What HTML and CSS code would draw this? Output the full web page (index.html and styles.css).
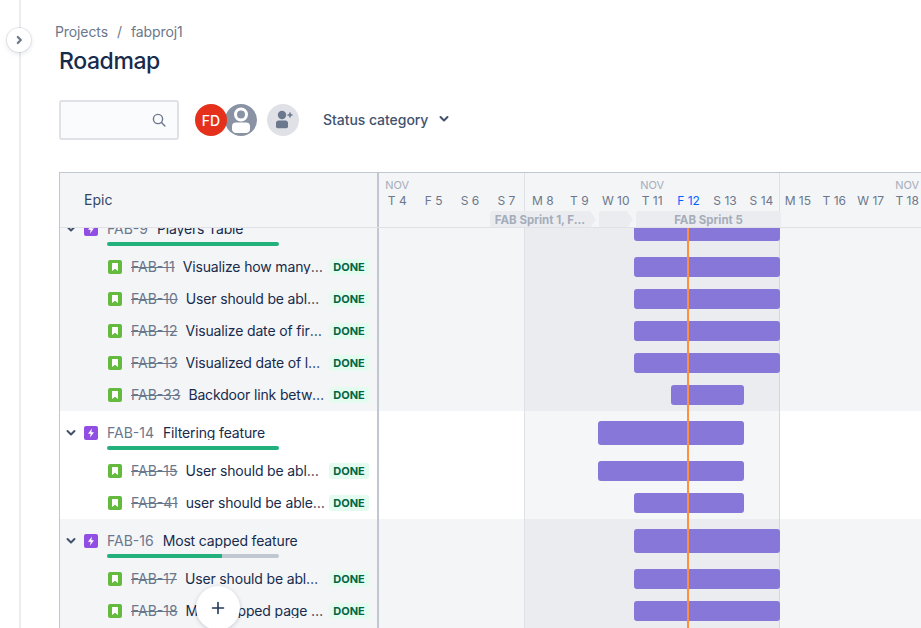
FILE: index.html
```html
<!DOCTYPE html>
<html lang="en">
<head>
    <meta name="viewport" content="width=device-width, initial-scale=1.0">
    <title>Roadmap</title>
    <link rel="stylesheet" href="styles.css">
</head>
<body>
    <div class="page">
        <div class="rail"></div>
        <button class="collapse">
            <svg width="12" height="12" viewBox="0 0 12 12"><path d="M4.800 3 7.800 6l-3 3" fill="none" stroke="#6b778c" stroke-width="2.200" stroke-linecap="round" stroke-linejoin="round"/></svg>
        </button>

        <div class="main">
            <div class="breadcrumb"><span>Projects</span><span class="sep">/</span><span>fabproj1</span></div>
            <h1>Roadmap</h1>

            <div class="toolbar">
                <div class="search">
                    <svg width="14" height="14" viewBox="0 0 14 14"><circle cx="6" cy="6" r="4.6" fill="none" stroke="#6b778c" stroke-width="1.4"/><path d="m9.500 9.500 3.400 3.400" stroke="#6b778c" stroke-width="1.4" stroke-linecap="round"/></svg>
                </div>
                <div class="avatars">
                    <div class="avatar avatar-fd">FD</div>
                    <div class="avatar avatar-user">
                        <svg width="32" height="32" viewBox="0 0 32 32"><circle cx="16" cy="10.500" r="5.500" fill="none" stroke="#fff" stroke-width="3"/><path d="M7 22c0-2.500 2-3.500 4-3.500h10c2 0 4 1 4 3.500v3c0 2.500-2 4-4 4h-10c-2 0-4-1.500-4-4z" fill="#fff"/></svg>
                    </div>
                </div>
                <div class="avatar avatar-add">
                    <svg width="20" height="20" viewBox="0 0 20 20"><circle cx="9" cy="5" r="4.200" fill="#6b778c"/><path d="M3 13c0-1.500 1-2.500 2.500-2.500h7c1.500 0 2.500 1 2.500 2.500v3.500c0 1-.8 1.700-1.700 1.700h-8.600c-.9 0-1.700-.7-1.700-1.700z" fill="#6b778c"/><path d="M17 2.500v5M14.500 5h5" stroke="#6b778c" stroke-width="1.600"/></svg>
                </div>
                <div class="filter">
                    Status category
                    <svg width="10" height="8" viewBox="0 0 10 8"><path d="m1.500 2 3.500 3.500L8.500 2" fill="none" stroke="#42526e" stroke-width="2" stroke-linecap="round" stroke-linejoin="round"/></svg>
                </div>
            </div>

            <div class="roadmap">
                <div class="head">
                    <div class="head-epic">Epic</div>
                    <div class="head-time">
                        <span class="week-line line-a"></span>
                        <span class="week-line line-b"></span>
                        <div class="days">
                            <div class="day"><small>NOV</small>T 4</div>
                            <div class="day"><small></small>F 5</div>
                            <div class="day"><small></small>S 6</div>
                            <div class="day"><small></small>S 7</div>
                            <div class="day"><small></small>M 8</div>
                            <div class="day"><small></small>T 9</div>
                            <div class="day"><small></small>W 10</div>
                            <div class="day"><small>NOV</small>T 11</div>
                            <div class="day today"><small></small>F 12</div>
                            <div class="day"><small></small>S 13</div>
                            <div class="day"><small></small>S 14</div>
                            <div class="day"><small></small>M 15</div>
                            <div class="day"><small></small>T 16</div>
                            <div class="day"><small></small>W 17</div>
                            <div class="day"><small>NOV</small>T 18</div>
                        </div>
                        <div class="sprints">
                            <div class="sprint sprint-1"><span>FAB Sprint 1, F...</span></div>
                            <div class="sprint sprint-2"></div>
                            <div class="sprint sprint-3"><span>FAB Sprint 5</span></div>
                        </div>
                    </div>
                </div>

                <div class="body">
                    <div class="week-band"></div>
                    <div class="today-line"></div>
                    <div class="rows">
                        <div class="group shaded">
                            <div class="row epic">
                                <div class="label">
                                    <svg class="caret" width="10" height="8" viewBox="0 0 10 8"><path d="m1.500 2 3.500 3.500L8.500 2" fill="none" stroke="#42526e" stroke-width="2" stroke-linecap="round" stroke-linejoin="round"/></svg>
                                    <svg class="type" width="14" height="14" viewBox="0 0 14 14"><rect width="14" height="14" rx="2" fill="#904ee2"/><path d="M8 2.500 4 7.800h2.700L6 11.500l4-5.300H7.300z" fill="#fff"/></svg>
                                    <span class="key">FAB-9</span><span class="title">Players Table</span>
                                    <div class="progress"><div class="progress-done" style="width: 100%"></div></div>
                                </div>
                                <div class="time"><div class="bar" style="margin-left: 255px; width: 146px"></div></div>
                            </div>
                            <div class="row story">
                                <div class="label">
                                    <svg class="type" width="14" height="14" viewBox="0 0 14 14"><rect width="14" height="14" rx="2" fill="#63ba3c"/><path d="M4 3.500c0-.3.200-.5.500-.5h5c.3 0 .5.200.5.500V11L7 8.800 4 11z" fill="#fff"/></svg>
                                    <span class="key">FAB-11</span><span class="title">Visualize how many players are capped</span>
                                    <span class="done">DONE</span>
                                </div>
                                <div class="time"><div class="bar" style="margin-left: 255px; width: 146px"></div></div>
                            </div>
                            <div class="row story">
                                <div class="label">
                                    <svg class="type" width="14" height="14" viewBox="0 0 14 14"><rect width="14" height="14" rx="2" fill="#63ba3c"/><path d="M4 3.500c0-.3.200-.5.500-.5h5c.3 0 .5.200.5.500V11L7 8.800 4 11z" fill="#fff"/></svg>
                                    <span class="key">FAB-10</span><span class="title">User should be able to sort the table</span>
                                    <span class="done">DONE</span>
                                </div>
                                <div class="time"><div class="bar" style="margin-left: 255px; width: 146px"></div></div>
                            </div>
                            <div class="row story">
                                <div class="label">
                                    <svg class="type" width="14" height="14" viewBox="0 0 14 14"><rect width="14" height="14" rx="2" fill="#63ba3c"/><path d="M4 3.500c0-.3.200-.5.500-.5h5c.3 0 .5.200.5.500V11L7 8.800 4 11z" fill="#fff"/></svg>
                                    <span class="key">FAB-12</span><span class="title">Visualize date of first cap for players</span>
                                    <span class="done">DONE</span>
                                </div>
                                <div class="time"><div class="bar" style="margin-left: 255px; width: 146px"></div></div>
                            </div>
                            <div class="row story">
                                <div class="label">
                                    <svg class="type" width="14" height="14" viewBox="0 0 14 14"><rect width="14" height="14" rx="2" fill="#63ba3c"/><path d="M4 3.500c0-.3.200-.5.500-.5h5c.3 0 .5.200.5.500V11L7 8.800 4 11z" fill="#fff"/></svg>
                                    <span class="key">FAB-13</span><span class="title">Visualized date of last cap for players</span>
                                    <span class="done">DONE</span>
                                </div>
                                <div class="time"><div class="bar" style="margin-left: 255px; width: 146px"></div></div>
                            </div>
                            <div class="row story">
                                <div class="label">
                                    <svg class="type" width="14" height="14" viewBox="0 0 14 14"><rect width="14" height="14" rx="2" fill="#63ba3c"/><path d="M4 3.500c0-.3.200-.5.500-.5h5c.3 0 .5.200.5.500V11L7 8.800 4 11z" fill="#fff"/></svg>
                                    <span class="key">FAB-33</span><span class="title">Backdoor link between tables and pages</span>
                                    <span class="done">DONE</span>
                                </div>
                                <div class="time"><div class="bar" style="margin-left: 292px; width: 73px"></div></div>
                            </div>
                        </div>

                        <div class="group">
                            <div class="row epic">
                                <div class="label">
                                    <svg class="caret" width="10" height="8" viewBox="0 0 10 8"><path d="m1.500 2 3.500 3.500L8.500 2" fill="none" stroke="#42526e" stroke-width="2" stroke-linecap="round" stroke-linejoin="round"/></svg>
                                    <svg class="type" width="14" height="14" viewBox="0 0 14 14"><rect width="14" height="14" rx="2" fill="#904ee2"/><path d="M8 2.500 4 7.800h2.700L6 11.500l4-5.300H7.300z" fill="#fff"/></svg>
                                    <span class="key">FAB-14</span><span class="title">Filtering feature</span>
                                    <div class="progress"><div class="progress-done" style="width: 100%"></div></div>
                                </div>
                                <div class="time"><div class="bar" style="margin-left: 219px; width: 146px"></div></div>
                            </div>
                            <div class="row story">
                                <div class="label">
                                    <svg class="type" width="14" height="14" viewBox="0 0 14 14"><rect width="14" height="14" rx="2" fill="#63ba3c"/><path d="M4 3.500c0-.3.200-.5.500-.5h5c.3 0 .5.200.5.500V11L7 8.800 4 11z" fill="#fff"/></svg>
                                    <span class="key">FAB-15</span><span class="title">User should be able to filter by team</span>
                                    <span class="done">DONE</span>
                                </div>
                                <div class="time"><div class="bar" style="margin-left: 219px; width: 146px"></div></div>
                            </div>
                            <div class="row story">
                                <div class="label">
                                    <svg class="type" width="14" height="14" viewBox="0 0 14 14"><rect width="14" height="14" rx="2" fill="#63ba3c"/><path d="M4 3.500c0-.3.200-.5.500-.5h5c.3 0 .5.200.5.500V11L7 8.800 4 11z" fill="#fff"/></svg>
                                    <span class="key">FAB-41</span><span class="title">user should be able to filter by date</span>
                                    <span class="done">DONE</span>
                                </div>
                                <div class="time"><div class="bar" style="margin-left: 255px; width: 110px"></div></div>
                            </div>
                        </div>

                        <div class="group shaded">
                            <div class="row epic">
                                <div class="label">
                                    <svg class="caret" width="10" height="8" viewBox="0 0 10 8"><path d="m1.500 2 3.500 3.500L8.500 2" fill="none" stroke="#42526e" stroke-width="2" stroke-linecap="round" stroke-linejoin="round"/></svg>
                                    <svg class="type" width="14" height="14" viewBox="0 0 14 14"><rect width="14" height="14" rx="2" fill="#904ee2"/><path d="M8 2.500 4 7.800h2.700L6 11.500l4-5.300H7.300z" fill="#fff"/></svg>
                                    <span class="key">FAB-16</span><span class="title">Most capped feature</span>
                                    <div class="progress"><div class="progress-done" style="width: 67%"></div></div>
                                </div>
                                <div class="time"><div class="bar" style="margin-left: 255px; width: 146px"></div></div>
                            </div>
                            <div class="row story">
                                <div class="label">
                                    <svg class="type" width="14" height="14" viewBox="0 0 14 14"><rect width="14" height="14" rx="2" fill="#63ba3c"/><path d="M4 3.500c0-.3.200-.5.500-.5h5c.3 0 .5.200.5.500V11L7 8.800 4 11z" fill="#fff"/></svg>
                                    <span class="key">FAB-17</span><span class="title">User should be able to see top players</span>
                                    <span class="done">DONE</span>
                                </div>
                                <div class="time"><div class="bar" style="margin-left: 255px; width: 146px"></div></div>
                            </div>
                            <div class="row story">
                                <div class="label">
                                    <svg class="type" width="14" height="14" viewBox="0 0 14 14"><rect width="14" height="14" rx="2" fill="#63ba3c"/><path d="M4 3.500c0-.3.200-.5.500-.5h5c.3 0 .5.200.5.500V11L7 8.800 4 11z" fill="#fff"/></svg>
                                    <span class="key">FAB-18</span><span class="title">Most capped page for all the players</span>
                                    <span class="done">DONE</span>
                                </div>
                                <div class="time"><div class="bar" style="margin-left: 255px; width: 146px"></div></div>
                            </div>
                            <div class="row row-end">
                                <div class="label"></div>
                                <div class="time"></div>
                            </div>
                        </div>
                    </div>
                </div>
            </div>
        </div>

        <button class="add">
            <svg width="14" height="14" viewBox="0 0 14 14"><path d="M7 1.500v11M1.500 7h11" stroke="#253858" stroke-width="1.600" stroke-linecap="round"/></svg>
        </button>
    </div>
</body>
</html>
```

FILE: styles.css
```css
* {
    box-sizing: border-box;
}
html, body {
    margin: 0;
    height: 100%;
}
body {
    font-family: Inter, "Liberation Sans", sans-serif;
    font-size: 14px;
    color: #172b4d;
    background: #fff;
}
button {
    padding: 0;
    border: 0;
    background: #fff;
}
.page {
    position: relative;
    display: flex;
    height: 628px;
    overflow: hidden;
}
.rail {
    flex: none;
    width: 21px;
    border-right: 2px solid #ebecf0;
}
.collapse {
    position: absolute;
    left: 7px;
    top: 28px;
    width: 24px;
    height: 24px;
    display: flex;
    align-items: center;
    justify-content: center;
    border-radius: 50%;
    box-shadow: 0 0 0 1px rgba(9, 30, 66, 0.08), 0 2px 4px 1px rgba(9, 30, 66, 0.08);
}
.main {
    flex: 1;
    min-width: 0;
    display: flex;
    flex-direction: column;
    padding: 23px 0 0 38px;
}
.breadcrumb {
    display: flex;
    height: 18px;
    line-height: 18px;
    margin-left: -4px;
    color: #6b778c;
    letter-spacing: -0.1px;
}
.sep {
    margin: 0 9px;
}
h1 {
    margin: 8px 0 0;
    font-size: 23px;
    line-height: 24px;
    height: 24px;
    font-weight: 500;
    letter-spacing: -0.4px;
    color: #172b4d;
}
.toolbar {
    display: flex;
    align-items: center;
    margin-top: 27px;
    height: 40px;
}
.search {
    width: 120px;
    height: 40px;
    display: flex;
    align-items: center;
    justify-content: flex-end;
    padding-right: 11px;
    background: #fafbfc;
    border: 2px solid #dfe1e6;
    border-radius: 3px;
}
.avatars {
    display: flex;
    margin-left: 16px;
}
.avatar {
    width: 32px;
    height: 32px;
    border-radius: 50%;
    display: flex;
    align-items: center;
    justify-content: center;
    overflow: hidden;
}
.avatar-fd {
    position: relative;
    z-index: 1;
    background: #e5311c;
    color: #fff;
    font-size: 14px;
    font-weight: 500;
}
.avatar-user {
    margin-left: -2px;
    background: #8993a4;
}
.avatar-add {
    margin-left: 10px;
    background: #dfe1e6;
}
.filter {
    display: flex;
    align-items: center;
    gap: 11px;
    margin-left: 24px;
    padding-bottom: 2px;
    font-weight: 500;
    color: #42526e;
    letter-spacing: -0.05px;
}
.roadmap {
    flex: 1;
    min-height: 0;
    display: flex;
    flex-direction: column;
    margin-top: 32px;
    border-top: 1px solid #c1c7d0;
    border-left: 1px solid #c1c7d0;
}
.head {
    flex: none;
    display: grid;
    grid-template-columns: 319px 1fr;
    height: 55px;
    background: #f4f5f7;
    border-bottom: 1px solid #dfe1e6;
}
.head-epic {
    display: flex;
    align-items: center;
    padding: 0 0 1px 24px;
    color: #344563;
    border-right: 2px solid #c1c7d0;
}
.head-time {
    position: relative;
    overflow: hidden;
}
.week-line {
    position: absolute;
    top: 0;
    bottom: 0;
    width: 1px;
    background: #dfe1e6;
}
.line-a {
    left: 145px;
}
.line-b {
    left: 400px;
}
.days {
    display: flex;
    width: 547px;
    height: 38px;
}
.day {
    position: relative;
    flex: none;
    width: 36.43px;
    display: flex;
    flex-direction: column;
    align-items: center;
    white-space: nowrap;
    font-size: 12px;
    line-height: 15px;
    color: #6b778c;
}
.day small {
    display: block;
    height: 15px;
    margin-top: 5px;
    font-size: 11px;
    line-height: 15px;
    color: #a5adba;
}
.today {
    color: #0065ff;
}
.sprints {
    position: relative;
    display: flex;
    gap: 3px;
    margin-left: 111px;
    height: 17px;
}
.sprint {
    flex: none;
    display: flex;
    align-items: center;
    justify-content: center;
    background: #ebecf0;
    border-radius: 3px 0 0 3px;
    font-size: 11.5px;
    font-weight: 700;
    color: #a5adba;
    white-space: nowrap;
    clip-path: polygon(0 0, calc(100% - 6px) 0, 100% 50%, calc(100% - 6px) 100%, 0 100%);
}
.sprint-1 {
    width: 106px;
    padding-right: 6px;
}
.sprint-2 {
    width: 34px;
}
.sprint-3 {
    width: 145px;
    border-radius: 3px;
    clip-path: none;
}
.body {
    position: relative;
    flex: 1;
    min-height: 0;
    overflow: hidden;
}
.week-band {
    position: absolute;
    z-index: 1;
    top: 0;
    bottom: 0;
    left: 464px;
    width: 256px;
    background: rgba(9, 30, 66, 0.04);
    border-left: 1px solid #dfe1e6;
    border-right: 1px solid #d4d7de;
}
.today-line {
    position: absolute;
    z-index: 3;
    top: 0;
    bottom: 0;
    left: 627px;
    width: 2px;
    background: #ff8f3d;
}
.rows {
    margin-top: -21px;
}
.shaded {
    background: #f4f5f7;
}
.row {
    display: grid;
    grid-template-columns: 319px 1fr;
}
.epic {
    height: 44px;
}
.story {
    height: 32px;
}
.row-end {
    height: 8px;
}
.label {
    position: relative;
    display: flex;
    align-items: center;
    min-width: 0;
    border-right: 2px solid #c1c7d0;
}
.epic .label {
    padding: 15px 8px 0 24px;
    align-items: flex-start;
}
.story .label {
    padding: 0 8px 0 48px;
}
.caret {
    flex: none;
    margin: 3px 8px 0 -18px;
}
.type {
    flex: none;
    margin-right: 9px;
}
.key {
    flex: none;
    color: #6b778c;
    margin-right: 8px;
    line-height: 14px;
}
.epic .key {
    margin-right: 9px;
}
.story .key {
    text-decoration: line-through;
}
.title {
    flex: 1;
    min-width: 0;
    overflow: hidden;
    white-space: nowrap;
    text-overflow: ellipsis;
    color: #172b4d;
    line-height: 14px;
    letter-spacing: -0.15px;
}
.done {
    flex: none;
    margin-left: 4px;
    width: 40px;
    height: 16px;
    line-height: 16px;
    text-align: center;
    border-radius: 3px;
    background: #e3fcef;
    color: #006644;
    font-size: 11px;
    font-weight: 700;
}
.progress {
    position: absolute;
    left: 47px;
    top: 35px;
    width: 172px;
    height: 4px;
    border-radius: 2px;
    background: #c1c7d0;
    overflow: hidden;
}
.progress-done {
    height: 100%;
    background: #22b07d;
}
.time {
    position: relative;
    z-index: 2;
    min-width: 0;
    display: flex;
    align-items: center;
}
.bar {
    flex: none;
    height: 20px;
    border-radius: 3px;
    background: #8777d9;
}
.epic .bar {
    height: 24px;
}
.add {
    position: absolute;
    z-index: 4;
    left: 196px;
    top: 586px;
    width: 44px;
    height: 44px;
    display: flex;
    align-items: center;
    justify-content: center;
    border-radius: 50%;
    box-shadow: 0 1px 4px rgba(9, 30, 66, 0.2);
}
```
